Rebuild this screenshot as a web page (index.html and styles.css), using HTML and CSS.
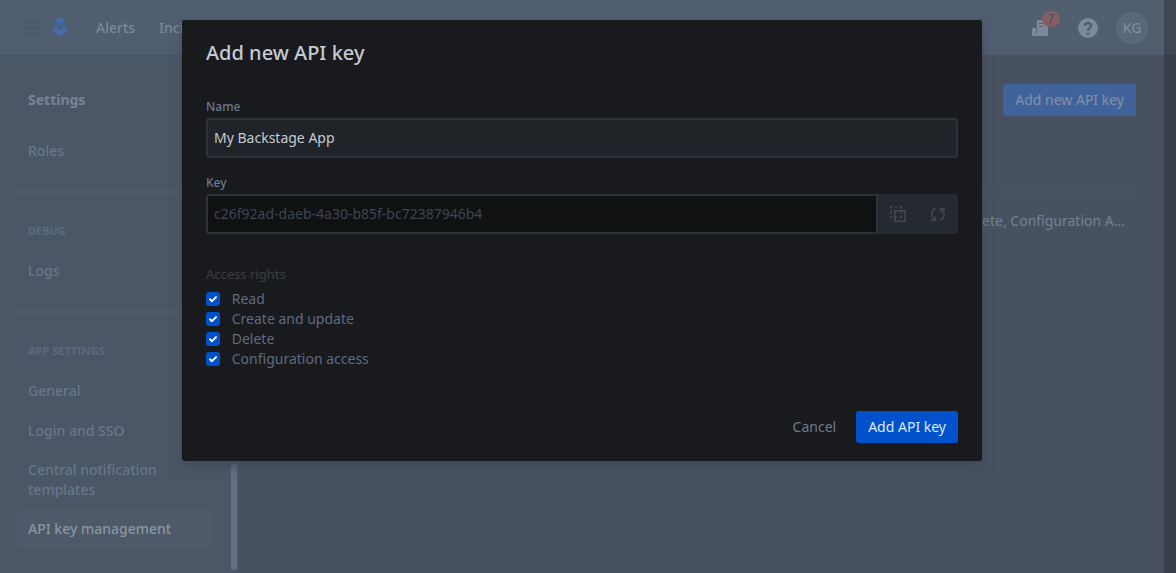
FILE: index.html
```html
<!DOCTYPE html>
<html lang="en">
<head>
<meta charset="utf-8">
<title>API key management</title>
<link rel="stylesheet" href="styles.css">
</head>
<body>
<div class="page">
  <div class="app">
    <header class="topbar">
      <svg class="switcher" width="16" height="16" viewBox="0 0 16 16"><path d="M0 0h4v4H0zM6 0h4v4H6zM12 0h4v4h-4zM0 6h4v4H0zM6 6h4v4H6zM12 6h4v4h-4zM0 12h4v4H0zM6 12h4v4H6zM12 12h4v4h-4z"/></svg>
      <svg class="logo" width="16" height="19" viewBox="0 0 16 19"><defs><linearGradient id="g" x1="0" y1="0" x2="0" y2="1"><stop offset="0" stop-color="#4471ad"/><stop offset="1" stop-color="#3f619a"/></linearGradient></defs><circle cx="8" cy="4.900" r="4.800" fill="url(#g)"/><path d="M.2 10.900Q0 10.300.6 10L3.600 8.700Q4.200 8.500 4.600 9Q6 11.200 8 12.400Q10 11.200 11.400 9Q11.800 8.500 12.400 8.700L15.400 10Q16 10.300 15.800 10.900Q13.400 15.600 8.700 18.300Q8 18.700 7.300 18.300Q2.600 15.600.2 10.900Z" fill="#456da8"/></svg>
      <nav class="nav"><a>Alerts</a><a>Incidents</a></nav>
      <div class="tools">
        <span class="news">
          <svg width="16" height="16" viewBox="0 0 16 16"><path fill-rule="evenodd" d="M6.500 0h8A1.500 1.500 0 0 1 16 1.500v13a1.500 1.500 0 0 1-1.500 1.500H1.500A1.500 1.500 0 0 1 0 14.500V9.500A1.500 1.500 0 0 1 1.500 8H4v6.500h.7V1.700A1.700 1.700 0 0 1 6.500 0zM7 3v1h4V3zM7 6v1h4V6z"/></svg>
          <b class="count">7</b>
        </span>
        <svg class="help" width="20" height="20" viewBox="0 0 20 20"><circle cx="10" cy="10" r="10"/><path d="M7 7.800C7 6 8.300 5 10 5s3 1 3 2.700c0 2.200-3 2.300-3 5.300" /><circle class="dot" cx="10" cy="15.700" r="1.300"/></svg>
        <span class="avatar">KG</span>
      </div>
    </header>
    <div class="body">
      <aside class="sidebar">
        <div class="menu">
          <h2>Settings</h2>
          <a class="item roles">Roles</a>
          <hr>
          <h3>DEBUG</h3>
          <a class="item">Logs</a>
          <hr>
          <h3>APP SETTINGS</h3>
          <a class="item">General</a>
          <a class="item">Login and SSO</a>
          <a class="item two">Central notification templates</a>
          <a class="item selected">API key management</a>
        </div>
        <div class="thumb"></div>
      </aside>
      <main class="main">
        <button class="add">Add new API key</button>
        <div class="row">Read, Create and update, Delete, Configuration A...</div>
      </main>
    </div>
  </div>
  <div class="gutter"><div class="gutter-top"></div></div>
</div>
<section class="modal">
  <h1>Add new API key</h1>
  <label class="label">Name</label>
  <div class="field">My Backstage App</div>
  <label class="label">Key</label>
  <div class="keyrow">
    <div class="field key">c26f92ad-daeb-4a30-b85f-bc72387946b4</div>
    <div class="actions">
      <svg width="16" height="16" viewBox="0 0 16 16"><path d="M4.800 4.800h10.400v10.400H4.800z"/><path d="M.8 2.500V.8h1.700M4.500.8h3M9.500.8h1.700v1.700M.8 4.500v3M.8 9.500v1.700h1.700M11.200 4.500v3M11.200 9.500v1.700H9.500M7.500 11.200H4.500"/></svg>
      <svg width="16" height="16" viewBox="0 0 16 16" class="refresh"><path d="M5.800 2.200Q1.700 4.300 1.700 8.300Q1.700 11 4.300 13.700M1 14.200h4.200V10.800M10.200 14.500Q14.300 12.300 14.300 8.300Q14.300 5.700 11.700 3.200M15.200 2.800H11V6.200"/></svg>
    </div>
  </div>
  <p class="rights">Access rights</p>
  <ul class="checks">
    <li><svg class="box" viewBox="0 0 14 14"><path d="m4 7.300 2 1.900 4-4.100"/></svg>Read</li>
    <li><svg class="box" viewBox="0 0 14 14"><path d="m4 7.300 2 1.900 4-4.100"/></svg>Create and update</li>
    <li><svg class="box" viewBox="0 0 14 14"><path d="m4 7.300 2 1.900 4-4.100"/></svg>Delete</li>
    <li><svg class="box" viewBox="0 0 14 14"><path d="m4 7.300 2 1.900 4-4.100"/></svg>Configuration access</li>
  </ul>
  <footer class="footer"><button class="cancel">Cancel</button><button class="submit">Add API key</button></footer>
</section>
</body>
</html>
```
FILE: styles.css
```css
* { box-sizing: border-box; }
body { margin: 0; overflow: hidden; font: 14px/20px "Noto Sans", sans-serif; color: #697687; }
h1, h2, h3, p, ul { margin: 0; padding: 0; }
svg { display: block; flex: none; }
button { border: 0; padding: 0 12px; height: 32px; border-radius: 3px; font: inherit; }
.page { display: flex; height: 573px; }
.app { flex: 1; display: flex; flex-direction: column; min-width: 0; }
.topbar { height: 55px; flex: none; display: flex; align-items: center; background: #505e6f; padding: 0 16px 0 24px; box-shadow: 0 1px 1px #475361; position: relative; }
.switcher { fill: #505968; }
.logo { margin-left: 12px; margin-top: -1px; }
.nav { display: flex; gap: 24px; margin-left: 28px; color: #7d8998; font-weight: 500; }
.tools { margin-left: auto; display: flex; align-items: center; }
.news { position: relative; fill: #7d8999; }
.count { position: absolute; left: 10px; top: -9px; width: 18px; height: 16px; border-radius: 8px; background: #835e62; color: #464e5b; font: 12px/16px "Noto Sans", sans-serif; text-align: center; }
.help { margin-left: 30px; fill: #7d8999; }
.help path { fill: none; stroke: #505e6e; stroke-width: 2.3; }
.help .dot { fill: #505e6e; }
.avatar { margin-left: 18px; width: 32px; height: 32px; line-height: 32px; border-radius: 50%; text-align: center; background: #5a6878; color: #7f8b9b; font-weight: 500; }
.body { flex: 1; display: flex; min-height: 0; }
.sidebar { width: 239px; background: #4b5767; display: flex; justify-content: space-between; }
.menu { width: 240px; padding: 35px 0 0 16px; }
.menu h2 { font-size: 14px; line-height: 20px; font-weight: 700; color: #788493; padding-left: 12px; }
.item { display: block; padding: 10px 12px; color: #697687; font-weight: 500; width: 196px; border-radius: 3px; }
.item.roles { margin-top: 21px; }
.item.two { padding: 9px 12px; }
.item.selected { padding: 9px 12px; margin-top: 1px; background: #4e5a69; color: #8a95a2; }
.menu hr { border: 0; height: 2px; margin: 20px 0 30px; background: #505d6d; }
.menu h3 { font-size: 11px; line-height: 16px; font-weight: 700; color: #5c6a80; padding-left: 12px; margin-bottom: 12px; }
.thumb { flex: none; align-self: flex-end; width: 6px; height: 106px; margin: 0 2px 3px 0; border-radius: 3px; background: #637081; }
.main { flex: 1; background: #48515f; padding: 29px 28px 0 40px; display: flex; flex-direction: column; align-items: flex-end; }
.add { background: #41639b; color: #8290aa; }
.row { align-self: stretch; margin-top: 75px; border-top: 2px solid #4c5766; padding: 18px 11px 0; color: #758292; text-align: right; }
.gutter { width: 12px; background: #383e4a; }
.gutter-top { height: 55px; background: #3e4752; }
.modal { position: absolute; left: 182px; top: 20px; width: 800px; height: 441px; border-radius: 3px; background: #191a1e; box-shadow: 0 0 1px #333c49, 0 6px 12px rgba(60, 70, 85, .65); padding: 20px 24px 18px; display: flex; flex-direction: column; }
.modal h1 { font-size: 20px; line-height: 26px; font-weight: 500; color: #c5cad1; margin-bottom: 33px; }
.label { font-size: 12px; line-height: 16px; font-weight: 500; color: #6b7b92; margin-bottom: 3px; }
.field { height: 40px; border: 2px solid #2b323a; border-radius: 3px; background: #202327; color: #c5cad1; padding: 8px 6px; margin-bottom: 17px; }
.keyrow { display: flex; height: 40px; }
.field.key { flex: 1; border-radius: 3px 0 0 3px; background: #101113; color: #3e454f; }
.actions { width: 80px; display: flex; align-items: center; justify-content: space-around; background: #252a31; border-radius: 0 3px 3px 0; }
.actions svg { fill: none; stroke: #44474b; stroke-width: 1.6; }
.rights { font-size: 13px; line-height: 20px; color: #3d3e41; margin-top: 30px; }
.checks { list-style: none; margin-top: 5px; color: #5e6b80; }
.checks li { display: flex; align-items: center; height: 20px; gap: 11.75px; }
.box { width: 14px; height: 14px; background: #0052cc; border-radius: 3px; fill: none; stroke: #fff; stroke-width: 1.9; stroke-linecap: round; stroke-linejoin: round; }
.footer { margin-top: auto; display: flex; justify-content: flex-end; gap: 8px; }
.cancel { background: none; color: #6d7b8c; }
.submit { background: #0052cc; color: #dfe8f6; }
```
